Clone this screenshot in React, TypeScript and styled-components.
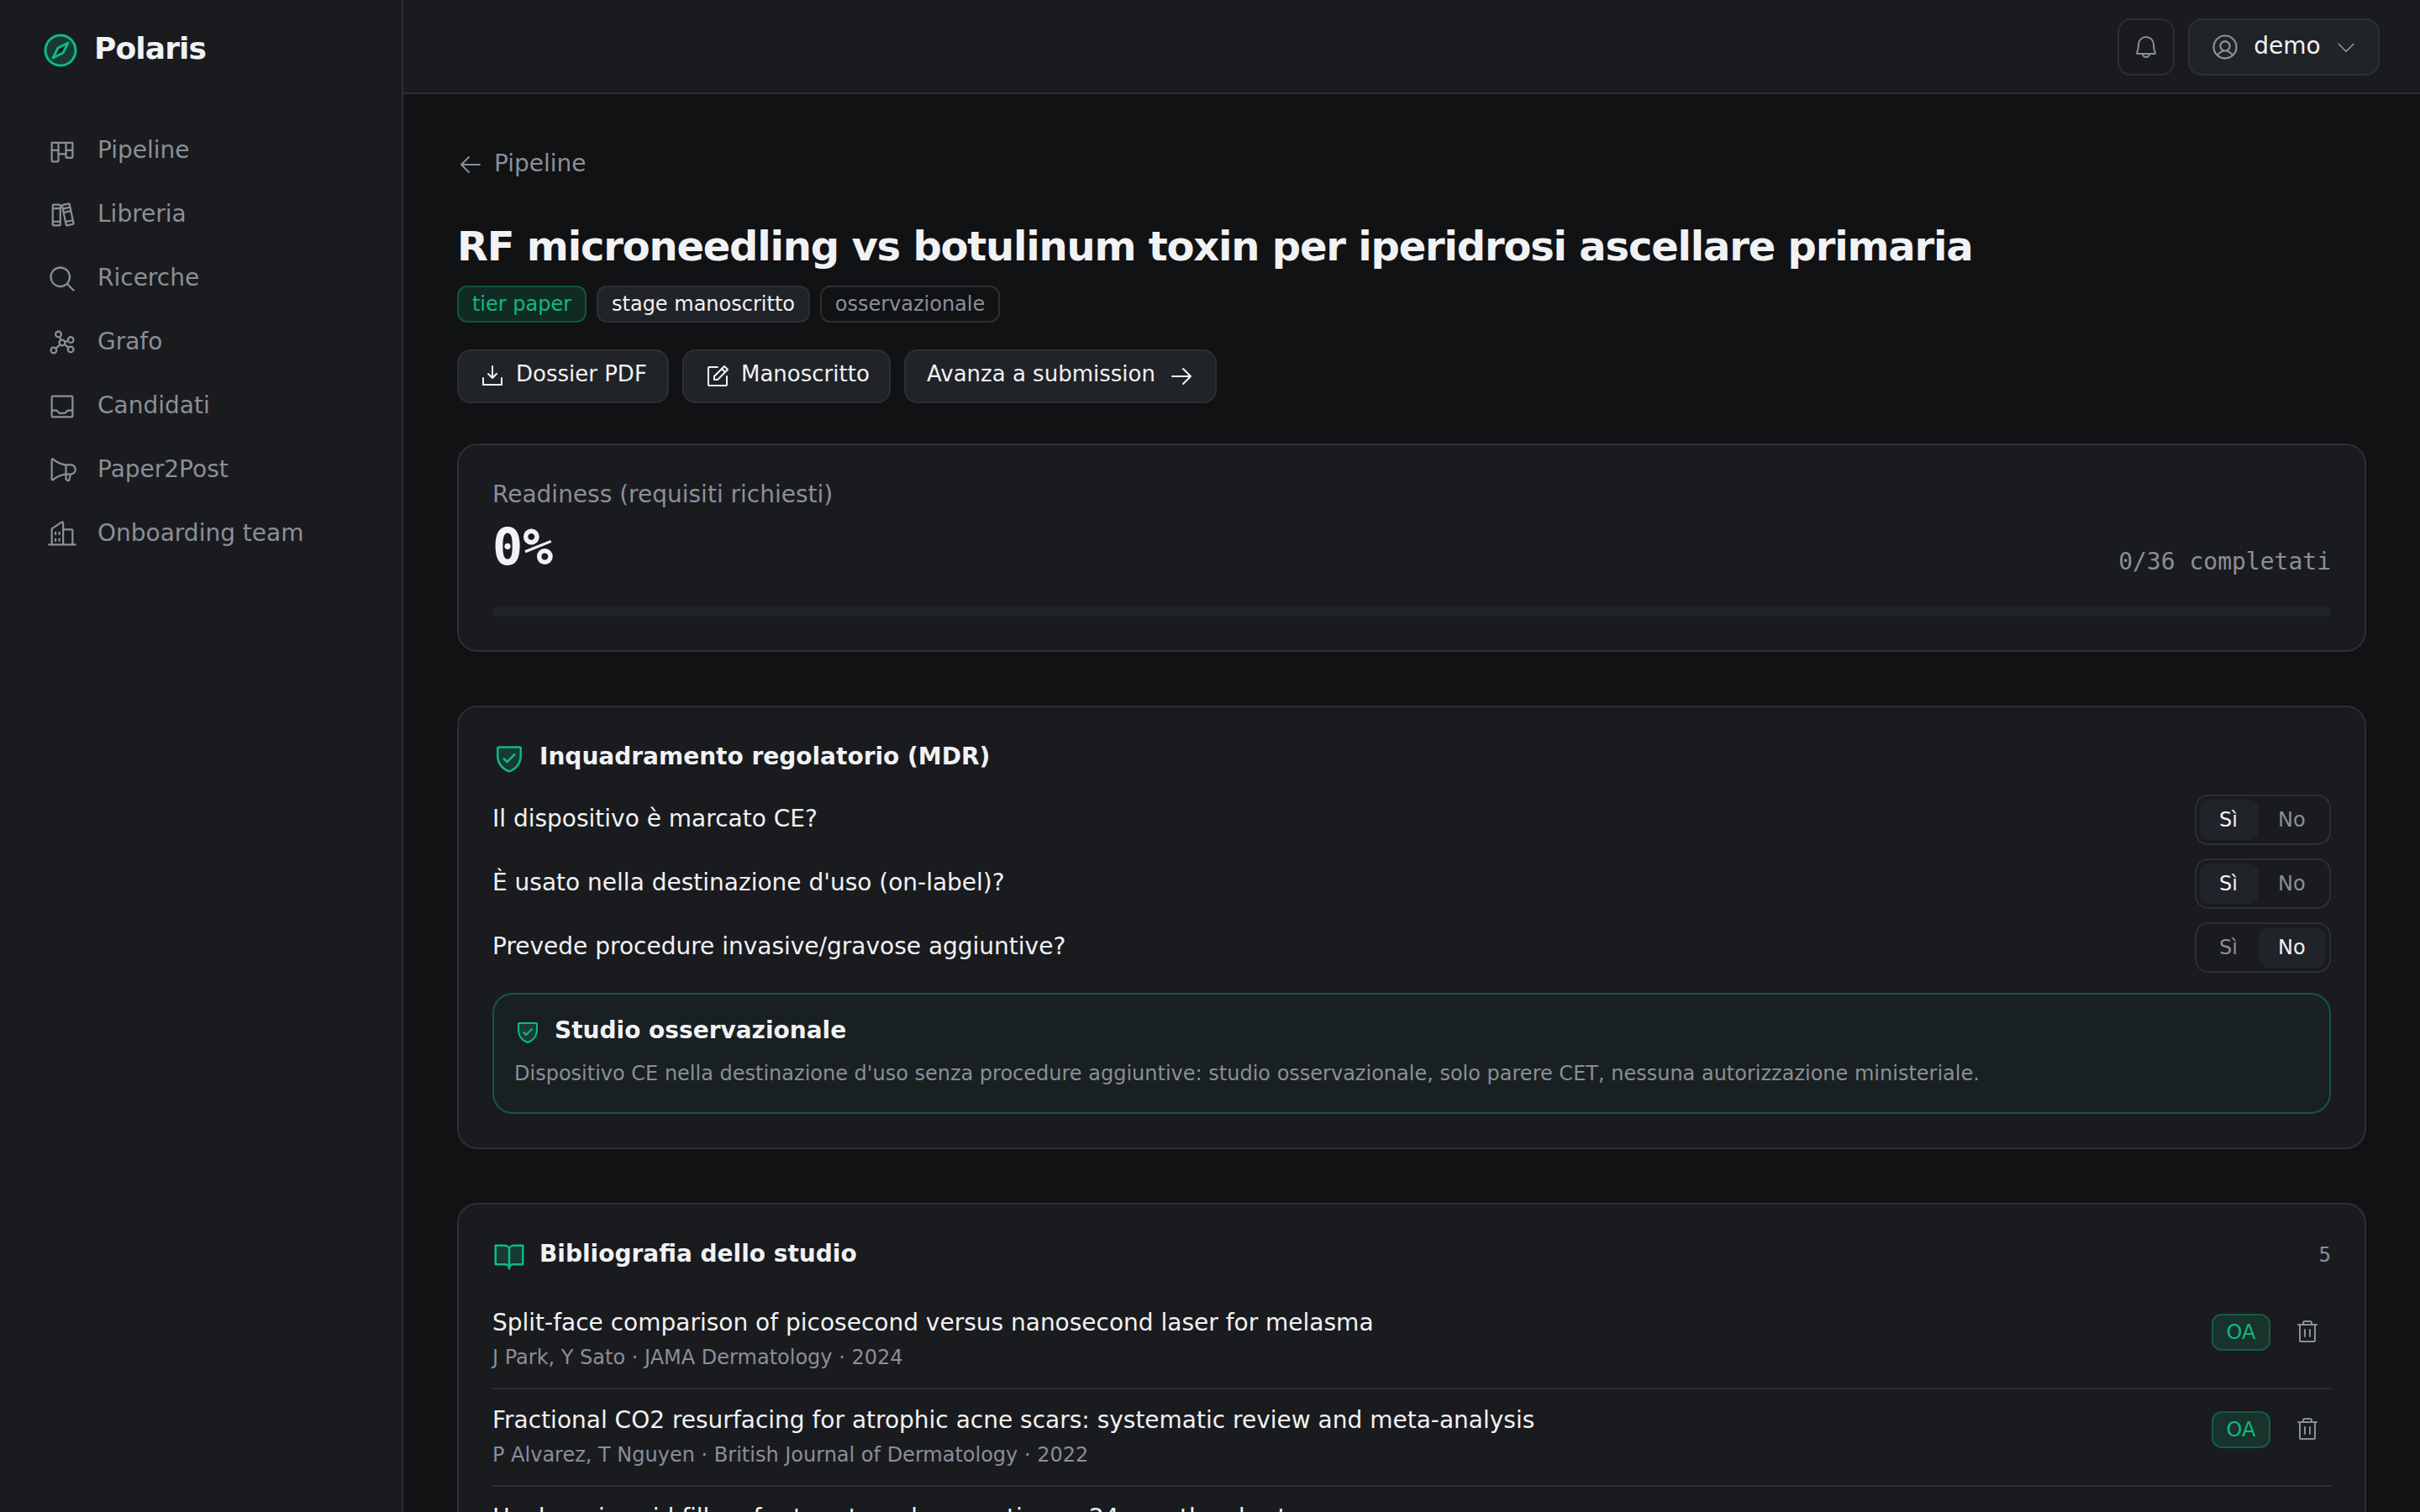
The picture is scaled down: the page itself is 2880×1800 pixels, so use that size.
import React from "react";
import styled, { createGlobalStyle, css } from "styled-components";
import {
  PiKanban,
  PiBooks,
  PiMagnifyingGlass,
  PiGraph,
  PiTray,
  PiMegaphone,
  PiBuildings,
  PiCompassDuotone,
  PiBell,
  PiUserCircle,
  PiCaretDown,
  PiArrowLeft,
  PiArrowRight,
  PiDownloadSimple,
  PiNotePencil,
  PiShieldCheckDuotone,
  PiBookOpenDuotone,
  PiTrash,
} from "react-icons/pi";

const c = {
  bg: "#111214",
  surface: "#1a1b1e",
  raised: "#202327",
  border: "#2d2f33",
  text: "#f1f2f4",
  muted: "#8a8f98",
  accent: "#10b981",
};

const GlobalStyle = createGlobalStyle`
  *, *::before, *::after { box-sizing: border-box; }
  html, body { margin: 0; background: ${c.bg}; }
  body {
    font-family: "DejaVu Sans", sans-serif;
    font-size: 28px;
    line-height: 42px;
    color: ${c.text};
  }
  svg { display: block; flex: none; }
  button { font: inherit; color: inherit; margin: 0; }
`;

const Shell = styled.div`
  display: grid;
  grid-template-columns: 480px 1fr;
  height: 1800px;
  overflow: hidden;
`;

const Sidebar = styled.aside`
  background: ${c.surface};
  border-right: 2px solid ${c.border};
  padding: 36px 24px;
`;

const Brand = styled.div`
  display: flex;
  align-items: center;
  gap: 16px;
  height: 48px;
  padding-left: 24px;
  color: ${c.accent};
`;

const BrandName = styled.span`
  padding-bottom: 4px;
  color: ${c.text};
  font-size: 36px;
  font-weight: 700;
  letter-spacing: -0.025em;
`;

const Nav = styled.nav`
  display: flex;
  flex-direction: column;
  gap: 4px;
  margin-top: 60px;
`;

const NavItem = styled.a`
  display: flex;
  align-items: center;
  gap: 24px;
  height: 72px;
  padding: 0 32px;
  color: ${c.muted};
`;

const Label = styled.span`
  padding-bottom: 2px;
  white-space: nowrap;
`;

const Page = styled.div`
  display: flex;
  flex-direction: column;
  min-width: 0;
`;

const Topbar = styled.header`
  display: flex;
  flex: none;
  align-items: center;
  justify-content: flex-end;
  gap: 16px;
  height: 112px;
  padding: 0 48px;
  background: ${c.surface};
  border-bottom: 2px solid ${c.border};
`;

const TopButton = styled.button<{ $filled?: boolean }>`
  display: flex;
  align-items: center;
  justify-content: space-between;
  height: 68px;
  margin-top: 2px;
  border: 2px solid ${c.border};
  border-radius: 16px;
  ${(p) =>
    p.$filled
      ? css`
          width: 228px;
          padding: 0 24px;
          background: ${c.raised};
          color: ${c.text};
        `
      : css`
          width: 68px;
          padding: 0 16px;
          background: transparent;
          color: ${c.muted};
        `}
`;

const Main = styled.main`
  flex: 1;
  min-height: 0;
  overflow: hidden;
  padding: 63px 64px 0;
`;

const BackLink = styled.a`
  display: flex;
  align-items: center;
  gap: 12px;
  height: 42px;
  color: ${c.muted};
`;

const Title = styled.h1`
  margin: 46px 0 0;
  height: 60px;
  font-size: 48px;
  line-height: 60px;
  font-weight: 700;
  letter-spacing: -0.025em;
  white-space: nowrap;
`;

const Chips = styled.div`
  display: flex;
  gap: 12px;
  margin-top: 17px;
`;

const Chip = styled.span<{ $tone?: "accent" | "solid" | "outline"; $width: number }>`
  display: flex;
  align-items: center;
  justify-content: center;
  width: ${(p) => p.$width}px;
  height: 44px;
  border: 2px solid ${c.border};
  border-radius: 12px;
  font-size: 24px;
  line-height: 36px;
  white-space: nowrap;
  ${(p) =>
    p.$tone === "accent" &&
    css`
      color: ${c.accent};
      background: rgba(16, 185, 129, 0.15);
      border-color: rgba(16, 185, 129, 0.3);
    `}
  ${(p) => p.$tone === "solid" && `background: ${c.raised};`}
  ${(p) => p.$tone === "outline" && `color: ${c.muted};`}
`;

const Actions = styled.div`
  display: flex;
  gap: 16px;
  margin-top: 32px;
`;

const ActionButton = styled.button<{ $width: number; $spread?: boolean }>`
  display: flex;
  align-items: center;
  justify-content: ${(p) => (p.$spread ? "space-between" : "flex-start")};
  gap: 12px;
  width: ${(p) => p.$width}px;
  height: 64px;
  padding: 0 24px 0 ${(p) => (p.$spread ? 25 : 24)}px;
  border: 2px solid ${c.border};
  border-radius: 16px;
  background: ${c.raised};
  font-size: 26px;

  ${Label} {
    padding-bottom: 6px;
  }
`;

const Card = styled.section<{ $gap?: number }>`
  margin-top: ${(p) => p.$gap ?? 64}px;
  padding: 40px;
  border: 2px solid ${c.border};
  border-radius: 24px;
  background: ${c.surface};
`;

const ReadinessRow = styled.div`
  display: flex;
  align-items: flex-end;
  justify-content: space-between;
  height: 120px;
`;

const Caption = styled.div`
  height: 37px;
  line-height: 37px;
  color: ${c.muted};
`;

const BigNumber = styled.div`
  height: 83px;
  line-height: 88px;
  font-family: "DejaVu Sans Mono", monospace;
  font-size: 60px;
  font-weight: 700;
`;

const MonoNote = styled.span<{ $size?: number }>`
  color: ${c.muted};
  font-family: "DejaVu Sans Mono", monospace;
  font-size: ${(p) => p.$size ?? 28}px;
  line-height: 42px;
`;

const Track = styled.div`
  height: 12px;
  margin-top: 32px;
  border-radius: 6px;
  background: ${c.raised};
`;

const CardHead = styled.div`
  display: flex;
  align-items: center;
  gap: 16px;
  height: 40px;
  color: ${c.accent};
`;

const CardTitle = styled.h2`
  flex: 1;
  margin: 0;
  padding-bottom: 2px;
  color: ${c.text};
  font-size: 28px;
  font-weight: 700;
`;

const Questions = styled.div`
  display: flex;
  flex-direction: column;
  gap: 16px;
  margin-top: 24px;
`;

const Question = styled.div`
  display: flex;
  align-items: center;
  justify-content: space-between;
  height: 60px;
`;

const Segmented = styled.div`
  display: grid;
  grid-template-columns: 70px 80px;
  height: 60px;
  padding: 4px;
  border: 2px solid ${c.border};
  border-radius: 16px;
`;

const Segment = styled.button<{ $on: boolean }>`
  height: 48px;
  padding: 0 0 0 23px;
  border: 0;
  border-radius: 12px;
  background: ${(p) => (p.$on ? c.raised : "transparent")};
  color: ${(p) => (p.$on ? c.text : c.muted)};
  font-size: 24px;
  line-height: 48px;
  text-align: left;
`;

const Verdict = styled.div`
  height: 144px;
  margin-top: 24px;
  padding: 24px;
  border: 2px solid rgba(16, 185, 129, 0.35);
  border-radius: 24px;
  background: rgba(16, 185, 129, 0.04);
`;

const VerdictText = styled.p`
  margin: 9px 0 0;
  color: ${c.muted};
  font-size: 24px;
`;

const Refs = styled.ul`
  margin: 24px 0 0;
  padding: 0;
  list-style: none;
`;

const Ref = styled.li`
  display: flex;
  align-items: flex-start;
  gap: 16px;
  height: 116px;
  padding-top: 20px;
  border-bottom: 2px solid ${c.border};
`;

const RefBody = styled.div`
  flex: 1;
  min-width: 0;
`;

const RefTitle = styled.div`
  line-height: 34px;
  white-space: nowrap;
`;

const RefMeta = styled.div`
  margin-top: 7px;
  color: ${c.muted};
  font-size: 24px;
  line-height: 34px;
`;

const RefActions = styled.div`
  display: flex;
  align-items: center;
  gap: 16px;
  height: 56px;
`;

const IconButton = styled.button`
  padding: 12px;
  border: 0;
  background: transparent;
  color: ${c.muted};
`;

const navItems = [
  { label: "Pipeline", Icon: PiKanban },
  { label: "Libreria", Icon: PiBooks },
  { label: "Ricerche", Icon: PiMagnifyingGlass },
  { label: "Grafo", Icon: PiGraph },
  { label: "Candidati", Icon: PiTray },
  { label: "Paper2Post", Icon: PiMegaphone },
  { label: "Onboarding team", Icon: PiBuildings },
];

const questions = [
  { text: "Il dispositivo è marcato CE?", yes: true },
  { text: "È usato nella destinazione d'uso (on-label)?", yes: true },
  { text: "Prevede procedure invasive/gravose aggiuntive?", yes: false },
];

const references = [
  {
    title: "Split-face comparison of picosecond versus nanosecond laser for melasma",
    meta: "J Park, Y Sato · JAMA Dermatology · 2024",
    openAccess: true,
  },
  {
    title: "Fractional CO2 resurfacing for atrophic acne scars: systematic review and meta-analysis",
    meta: "P Alvarez, T Nguyen · British Journal of Dermatology · 2022",
    openAccess: true,
  },
  {
    title: "Hyaluronic acid fillers for tear trough correction: a 24-month cohort",
    meta: "",
    openAccess: false,
  },
];

export default function App() {
  return (
    <>
      <GlobalStyle />
      <Shell>
        <Sidebar>
          <Brand>
            <PiCompassDuotone size={48} />
            <BrandName>Polaris</BrandName>
          </Brand>
          <Nav>
            {navItems.map(({ label, Icon }) => (
              <NavItem key={label}>
                <Icon size={36} />
                <Label>{label}</Label>
              </NavItem>
            ))}
          </Nav>
        </Sidebar>
        <Page>
          <Topbar>
            <TopButton aria-label="Notifiche">
              <PiBell size={32} />
            </TopButton>
            <TopButton $filled>
              <PiUserCircle size={36} color={c.muted} />
              <Label>demo</Label>
              <PiCaretDown size={28} color={c.muted} />
            </TopButton>
          </Topbar>
          <Main>
            <BackLink>
              <PiArrowLeft size={32} />
              <Label>Pipeline</Label>
            </BackLink>
            <Title>RF microneedling vs botulinum toxin per iperidrosi ascellare primaria</Title>
            <Chips>
              <Chip $tone="accent" $width={154}>tier paper</Chip>
              <Chip $tone="solid" $width={254}>stage manoscritto</Chip>
              <Chip $tone="outline" $width={214}>osservazionale</Chip>
            </Chips>
            <Actions>
              <ActionButton $width={252}>
                <PiDownloadSimple size={32} />
                <Label>Dossier PDF</Label>
              </ActionButton>
              <ActionButton $width={248}>
                <PiNotePencil size={32} />
                <Label>Manoscritto</Label>
              </ActionButton>
              <ActionButton $width={372} $spread>
                <Label>Avanza a submission</Label>
                <PiArrowRight size={32} />
              </ActionButton>
            </Actions>

            <Card $gap={48}>
              <ReadinessRow>
                <div>
                  <Caption>Readiness (requisiti richiesti)</Caption>
                  <BigNumber>0%</BigNumber>
                </div>
                <MonoNote>0/36 completati</MonoNote>
              </ReadinessRow>
              <Track />
            </Card>

            <Card>
              <CardHead>
                <PiShieldCheckDuotone size={40} />
                <CardTitle>Inquadramento regolatorio (MDR)</CardTitle>
              </CardHead>
              <Questions>
                {questions.map((q) => (
                  <Question key={q.text}>
                    <Label>{q.text}</Label>
                    <Segmented>
                      <Segment $on={q.yes}>Sì</Segment>
                      <Segment $on={!q.yes}>No</Segment>
                    </Segmented>
                  </Question>
                ))}
              </Questions>
              <Verdict>
                <CardHead>
                  <PiShieldCheckDuotone size={32} />
                  <CardTitle>Studio osservazionale</CardTitle>
                </CardHead>
                <VerdictText>
                  Dispositivo CE nella destinazione d'uso senza procedure aggiuntive: studio osservazionale, solo parere
                  CET, nessuna autorizzazione ministeriale.
                </VerdictText>
              </Verdict>
            </Card>

            <Card>
              <CardHead>
                <PiBookOpenDuotone size={40} />
                <CardTitle>Bibliografia dello studio</CardTitle>
                <MonoNote $size={24}>5</MonoNote>
              </CardHead>
              <Refs>
                {references.map((r) => (
                  <Ref key={r.title}>
                    <RefBody>
                      <RefTitle>{r.title}</RefTitle>
                      <RefMeta>{r.meta}</RefMeta>
                    </RefBody>
                    <RefActions>
                      {r.openAccess && (
                        <Chip $tone="accent" $width={70}>
                          OA
                        </Chip>
                      )}
                      <IconButton aria-label="Rimuovi">
                        <PiTrash size={32} />
                      </IconButton>
                    </RefActions>
                  </Ref>
                ))}
              </Refs>
            </Card>
          </Main>
        </Page>
      </Shell>
    </>
  );
}
